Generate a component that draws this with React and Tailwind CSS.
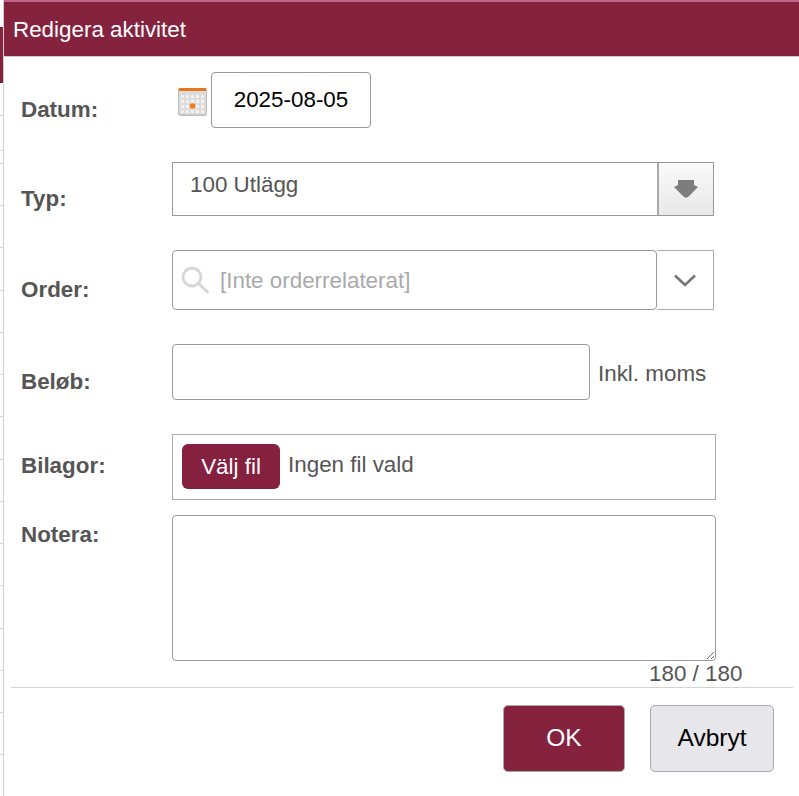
const ticks = [115, 150, 163, 205, 247, 290, 332, 374, 416, 459, 501, 543, 585, 628, 670, 712, 754];

const CalendarIcon = () => (
  <svg width="31" height="30" viewBox="0 0 31 30" className="mt-[15px] mr-[3px] ml-[5px] shrink-0">
    <rect x="1" y="2" width="29" height="27" rx="3" fill="#bdbdbd" />
    <rect x="2" y="3" width="27" height="24.5" rx="2" fill="#dcdcdc" />
    {[8, 13, 18, 23].map((y) =>
      [5, 10, 15, 20, 25].map((x) => (
        <rect key={`${x}-${y}`} x={x - 1} y={y} width="3" height="3" fill="#f2f2f2" />
      ))
    )}
    <rect x="1.5" y="1" width="28" height="3" rx="1" fill="#e8761c" />
    <circle cx="15.5" cy="19" r="2.8" fill="#f47b16" />
  </svg>
);

const SearchIcon = () => (
  <svg width="30" height="30" viewBox="0 0 30 30" fill="none" stroke="#d6d6d6" className="shrink-0">
    <circle cx="12" cy="12" r="9" strokeWidth="2.8" />
    <path d="M18.5 18.5 L27.5 27" strokeWidth="3" strokeLinecap="round" />
  </svg>
);

const Label = ({ children, className = '' }) => (
  <div className={`w-[151px] shrink-0 font-bold text-[#555] leading-[26px] ${className}`}>{children}</div>
);

export default function App() {
  return (
    <div className="relative w-[799px] h-[796px] overflow-hidden bg-white text-[22.4px] font-['Liberation_Sans',Arial,sans-serif]">
      {/* page behind the dialog */}
      <div className="absolute left-0 top-[27px] w-[3px] h-[56px] bg-[#85233f]" />
      {ticks.map((y) => (
        <div key={y} className="absolute left-0 w-[3px] h-px bg-[#d8d8d8]" style={{ top: y }} />
      ))}

      <div className="absolute left-[3px] top-0 right-0 bottom-0 flex flex-col bg-white border-l border-l-[#cfcfcf]">
        {/* title bar */}
        <div className="h-[57px] shrink-0 pl-[9px] pt-[2px] flex items-center bg-[#85233f] border-t-2 border-t-[#c0648a] border-b border-b-[#cfcfcf] text-white">
          Redigera aktivitet
        </div>

        <div className="flex flex-col pl-[17px]">
          {/* Datum */}
          <div className="flex mt-[15px]">
            <Label className="mt-[25px]">Datum:</Label>
            <CalendarIcon />
            <input
              readOnly
              value="2025-08-05"
              className="w-[160px] h-[56px] text-center text-black bg-white border border-[#999] rounded-[4px] outline-none"
            />
          </div>

          {/* Typ */}
          <div className="flex mt-[34px]">
            <Label className="mt-[24px]">Typ:</Label>
            <div className="flex w-[542px] h-[54px] border border-[#999]">
              <div className="flex-1 pl-[17px] pt-[9px] leading-[26px] text-[#555]">100 Utlägg</div>
              <div className="w-[56px] flex items-center justify-center border-l-2 border-l-[#aaa] bg-gradient-to-b from-[#fafafa] to-[#e8e8e8]">
                <svg width="24" height="18" viewBox="0 0 24 18" fill="#7d7d7d">
                  <path d="M4 0 H20 L20 5 L24 7 L14 17 Q12 18 10 17 L0 7 L4 5 Z" />
                </svg>
              </div>
            </div>
          </div>

          {/* Order */}
          <div className="flex mt-[34px]">
            <Label className="mt-[27px]">Order:</Label>
            <div className="flex w-[542px] h-[60px]">
              <div className="flex-1 flex items-center pl-[7px] gap-[10px] border border-[#999] rounded-[4px]">
                <SearchIcon />
                <span className="text-[#aaa] leading-[26px] mt-[1px]">[Inte orderrelaterat]</span>
              </div>
              <div className="w-[57px] flex items-center justify-center border border-l-0 border-[#aaa]">
                <svg width="22" height="13" viewBox="0 0 22 13" fill="none" stroke="#777" strokeWidth="2.6">
                  <path d="M1 1.5 L11 11 L21 1.5" />
                </svg>
              </div>
            </div>
          </div>

          {/* Belopp */}
          <div className="flex mt-[34px]">
            <Label className="mt-[25px]">Beløb:</Label>
            <input className="w-[418px] h-[56px] bg-white border border-[#999] rounded-[4px] outline-none" />
            <div className="ml-[8px] mt-[17px] leading-[26px] text-[#555]">Inkl. moms</div>
          </div>

          {/* Bilagor */}
          <div className="flex mt-[34px]">
            <Label className="mt-[19px]">Bilagor:</Label>
            <div className="flex items-start w-[544px] h-[66px] pl-[9px] pt-[9px] border border-[#aaa]">
              <button className="w-[98px] h-[45px] rounded-[6px] bg-[#85203f] text-white">Välj fil</button>
              <span className="ml-[8px] mt-[8px] leading-[26px] text-[#555]">Ingen fil vald</span>
            </div>
          </div>

          {/* Notera */}
          <div className="flex mt-[15px]">
            <Label className="mt-[7px]">Notera:</Label>
            <textarea className="block w-[544px] h-[146px] bg-white border border-[#999] rounded-[4px] outline-none resize" />
          </div>

          <div className="pl-[628px] leading-[26px] text-[#555] whitespace-nowrap">180 / 180</div>
        </div>

        {/* footer */}
        <div className="ml-[7px] mr-[6px] h-px bg-[#d4d4d4]" />
        <div className="flex justify-end pr-[25px] pt-[17px] gap-[25px] text-[24.5px]">
          <button className="w-[122px] h-[67px] rounded-[5px] bg-[#85233f] border border-[#aaa] text-white">OK</button>
          <button className="w-[124px] h-[67px] rounded-[5px] bg-[#e7e7eb] border border-[#aaa] text-black">Avbryt</button>
        </div>
      </div>
    </div>
  );
}
